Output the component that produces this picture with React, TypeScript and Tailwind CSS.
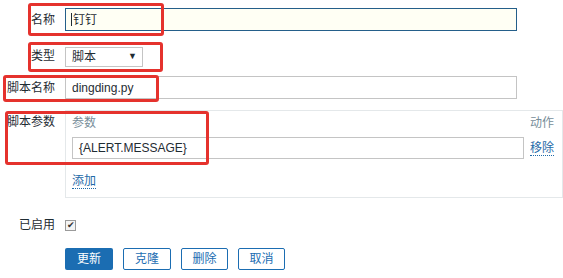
const font = { fontFamily: '"Liberation Sans", Arial, "Noto Sans CJK SC", sans-serif' };

function Label({ children }: { children: React.ReactNode }) {
  return <div className="w-[55px] shrink-0 text-right text-[12px] text-[#1f2c33] whitespace-nowrap">{children}</div>;
}

function RedBox({ className }: { className: string }) {
  return <div className={`absolute border-[3px] border-[#e5322d] rounded-[3px] pointer-events-none ${className}`} />;
}

export default function App() {
  return (
    <div className="relative w-[563px] h-[278px] overflow-hidden bg-white text-[12px] text-[#1f2c33]" style={font}>
      <div className="flex flex-col pt-[8px]">
        {/* name */}
        <div className="flex items-center gap-[10px] h-[23px]">
          <Label>名称</Label>
          <div className="flex items-center w-[452px] h-[23px] border border-[#245f8a] bg-[#fffff4] pl-[5px]">
            <span className="w-px h-[13px] bg-[#1f2c33] mr-[1px]" />
            <span>钉钉</span>
          </div>
        </div>

        {/* type */}
        <div className="flex items-start gap-[10px] mt-[16px] h-[20px]">
          <Label>类型</Label>
          <div className="flex items-center justify-between w-[78px] h-[20px] border border-[#c4c4c4] bg-white pl-[6px] pr-[5px]">
            <span>脚本</span>
            <span className="text-[9px] text-[#1f2c33]">▼</span>
          </div>
        </div>

        {/* script name */}
        <div className="flex items-center gap-[10px] mt-[9px] h-[23px]">
          <Label>脚本名称</Label>
          <div className="flex items-center w-[452px] h-[23px] border border-[#c4c4c4] bg-white pl-[6px]">
            dingding.py
          </div>
        </div>

        {/* params */}
        <div className="flex items-start gap-[10px] mt-[11px]">
          <div className="pt-[3px]">
            <Label>脚本参数</Label>
          </div>
          <div className="w-[500px] h-[88px] border border-[#e4e8ea] pl-[6px] pt-[2px]">
            <div className="flex items-center h-[20px] text-[#768d99]">
              <span className="w-[458px]">参数</span>
              <span>动作</span>
            </div>
            <div className="flex items-center mt-[4px] h-[22px]">
              <div className="flex items-center w-[452px] h-[22px] border border-[#c4c4c4] bg-white pl-[6px]">
                {"{ALERT.MESSAGE}"}
              </div>
              <span className="ml-[6px] text-[#1f6aa8] border-b border-dotted border-[#1f6aa8] leading-[14px]">移除</span>
            </div>
            <div className="mt-[14px] h-[16px] flex items-center">
              <span className="text-[#1f6aa8] border-b border-dotted border-[#1f6aa8] leading-[14px]">添加</span>
            </div>
          </div>
        </div>

        {/* enabled */}
        <div className="flex items-center gap-[10px] mt-[20px] h-[14px]">
          <Label>已启用</Label>
          <div className="flex items-center justify-center w-[11px] h-[11px] border border-[#9a9a9a] bg-[#f4f4f4] text-[9px] leading-none text-[#333]">
            ✔
          </div>
        </div>

        {/* buttons */}
        <div className="flex items-center gap-[10px] mt-[16px] pl-[65px]">
          <button className="w-[48px] h-[22px] rounded-[2px] bg-[#1b6db2] text-white text-[12px]">更新</button>
          <button className="w-[48px] h-[22px] rounded-[2px] border border-[#1b6db2] bg-white text-[#1b6db2] text-[12px]">克隆</button>
          <button className="w-[47px] h-[22px] rounded-[2px] border border-[#1b6db2] bg-white text-[#1b6db2] text-[12px]">删除</button>
          <button className="w-[47px] h-[22px] rounded-[2px] border border-[#1b6db2] bg-white text-[#1b6db2] text-[12px]">取消</button>
        </div>
      </div>

      <RedBox className="left-[28px] top-[3px] w-[136px] h-[33px]" />
      <RedBox className="left-[28px] top-[42px] w-[135px] h-[30px]" />
      <RedBox className="left-[3px] top-[75px] w-[156px] h-[27px]" />
      <RedBox className="left-[5px] top-[111px] w-[204px] h-[54px]" />
    </div>
  );
}
